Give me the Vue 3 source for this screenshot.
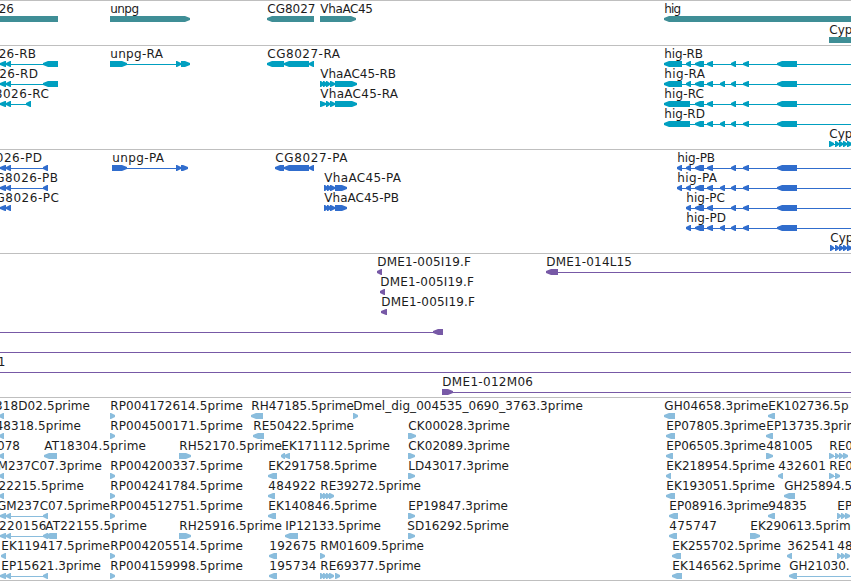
<script setup>
// label: [text, x, right edge], a null x anchors the text at its right edge
// and takes its width from the fourth value
// exons: [start, end], line: [start, end]
const f = (label, dir, exons = [], line = null) => ({ label, dir, exons, line })

const HIG = [[707, 713], [731, 736], [743, 749], [777, 797]]
const HIG_EXTRA = [[720, 725], ...HIG]
const CYP = [[829, 834], [835, 839], [839, 843], [843, 847], [847, 852]]
const CG_TAIL = [[0, 6], [6, 11]]

const rp = (name) => f([`${name}.5prime`, 110, 243], 'r', [[110, 115]])

const tracks = [
  {
    name: 'gene',
    height: 44,
    step: 21,
    color: '#3f8e96',
    rows: [
      [
        f(['CG8026', null, 14, 48], 'r', [[-20, 58, 0]]),
        f(['unpg', 110, 139], 'r', [[110, 190]]),
        f(['CG8027', 267, 315.5], 'l', [[267, 314]]),
        f(['VhaAC45', 320, 373], 'r', [[320, 356]]),
        f(['hig', 664, 681], 'l', [[664, 860]])
      ],
      [f(['Cyp', 829], 'r', [[829, 860, 0]])]
    ]
  },
  {
    name: 'transcript',
    height: 103,
    step: 20,
    color: '#009fc0',
    rows: [
      [
        f(['CG8026-RB', null, 36, 71.5], 'l', [...CG_TAIL, [43, 58]], [0, 58]),
        f(['unpg-RA', 110, 163], 'r', [[110, 127], [176, 181], [181, 190]], [110, 190]),
        f(['CG8027-RA', 267, 340], 'l', [[267, 284], [284, 309], [309, 314]], [267, 314]),
        f(['hig-RB', 664, 703], 'l', [[664, 682], [686, 691], [695, 704], ...HIG], [664, 851])
      ],
      [
        f(['CG8026-RD', null, 38, 73.5], 'l', [...CG_TAIL, [43, 58]], [0, 58]),
        f(['VhaAC45-RB', 320, 396], 'r', [[320, 324], [323, 327], [326, 330], [330, 335], [335, 357]], [320, 357]),
        f(['hig-RA', 664, 705], 'l', [[664, 682], [686, 691], [695, 704], ...HIG_EXTRA], [664, 851])
      ],
      [
        f(['CG8026-RC', null, 49, 73], 'l', [...CG_TAIL, [26, 31]], [0, 31]),
        f(['VhaAC45-RA', 320, 398], 'r', [[320, 326], [326, 330], [330, 335], [335, 357]], [320, 357]),
        f(['hig-RC', 664, 704], 'l', [[664, 690], [695, 704], ...HIG], [664, 851])
      ],
      [f(['hig-RD', 664, 705], 'l', [[664, 690], [695, 704], ...HIG_EXTRA], [664, 851])],
      [f(['Cyp', 829], 'r', CYP, [829, 851])]
    ]
  },
  {
    name: 'protein',
    height: 103,
    step: 20,
    color: '#306dcd',
    rows: [
      [
        f(['CG8026-PD', null, 42, 73], 'l', [...CG_TAIL, [43, 48]], [0, 48]),
        f(['unpg-PA', 112, 164], 'r', [[112, 127], [176, 181], [181, 188]], [112, 188]),
        f(['CG8027-PA', 275, 347.5], 'l', [[275, 284], [284, 309], [309, 314]], [275, 314]),
        f(['hig-PB', 677, 715], 'l', [[677, 682], [686, 691], [695, 704], ...HIG], [677, 851])
      ],
      [
        f(['CG8026-PB', null, 58, 71.5], 'l', [...CG_TAIL, [43, 48]], [0, 48]),
        f(['VhaAC45-PA', 324, 401], 'r', [[324, 328], [327, 331], [330, 335], [335, 347]], [324, 347]),
        f(['hig-PA', 677, 717], 'l', [[677, 682], [686, 691], [695, 704], ...HIG_EXTRA], [677, 851])
      ],
      [
        f(['CG8026-PC', null, 59, 72.5], 'l', CG_TAIL),
        f(['VhaAC45-PB', 324, 399], 'r', [[324, 328], [327, 331], [330, 335], [335, 347]], [324, 347]),
        f(['hig-PC', 686, 725], 'l', [[686, 691], [695, 704], ...HIG], [686, 851])
      ],
      [f(['hig-PD', 686, 726], 'l', [[686, 691], [695, 704], ...HIG_EXTRA], [686, 851])],
      [f(['Cyp', 830], 'r', [[830, 834], ...CYP.slice(1)], [830, 851])]
    ]
  },
  {
    name: 'clone',
    height: 143,
    step: 20,
    color: '#7759a6',
    rows: [
      [
        f(['DME1-005I19.F', 377, 471], 'l', [[377, 382]]),
        f(['DME1-014L15', 546, 632], 'l', [[546, 558]], [546, 851])
      ],
      [f(['DME1-005I19.F', 380, 474], 'l', [[380, 385]])],
      [f(['DME1-005I19.F', 381, 475], 'l', [[381, 387]])],
      [f(null, 'l', [[433, 443]], [0, 443])],
      [f(null, 'l', [], [0, 851])],
      [f(['1', null, 5.5], 'l', [], [0, 851])],
      [f(['DME1-012M06', 442, 533], 'r', [[442, 453]], [442, 851])]
    ]
  },
  {
    name: 'est',
    height: 182,
    step: 20,
    color: '#8abddd',
    rows: [
      [
        f(['318D02.5prime', null, 90, 95], 'l', [[-1, 4]]),
        rp('RP004172614'),
        f(['RH47185.5prime', 251, 354], 'l', [[251, 263]]),
        f(['Dmel_dig_004535_0690_3763.3prime', 353, 583], 'r', [[353, 358]]),
        f(['GH04658.3prime', 664, 768.5], 'l', [[664, 675]]),
        f(['EK102736.5p', 768], 'l', [[768, 775]])
      ],
      [
        f(['48318.5prime', null, 81, 85.5], 'l', [[-1, 4]]),
        rp('RP004500171'),
        f(['RE50422.5prime', 253, 354], 'l', [[253, 264]]),
        f(['CK00028.3prime', 408, 510], 'r', [[408, 416]]),
        f(['EP07805.3prime', 666, 766], 'l', [[666, 675]]),
        f(['EP13735.3prim', 766], 'l', [[766, 773]])
      ],
      [
        f(['078', null, 20], 'l', [[-1, 4]]),
        f(['AT18304.5prime', 44, 146], 'l', [[44, 57]]),
        f(['RH52170.5prime', 179, 282], 'r', [[179, 191]]),
        f(['EK171112.5prime', 281, 390], 'l', [[281, 285], [284, 290]]),
        f(['CK02089.3prime', 408, 510], 'r', [[408, 415]]),
        f(['EP06505.3prime', 666, 766], 'l', [[666, 673]]),
        f(['481005', 766, 813], 'r', [[766, 773]]),
        f(['RE0', 829], 'r', [[829, 834], [835, 839], [839, 843], [843, 848]], [829, 848])
      ],
      [
        f(['M237C07.3prime', null, 102, 104.5], 'l', [[-1, 4]]),
        rp('RP004200337'),
        f(['EK291758.5prime', 268, 377], 'l', [[268, 277]]),
        f(['LD43017.3prime', 408, 509], 'r', [[408, 415]]),
        f(['EK218954.5prime', 666, 775], 'l', [[666, 671]]),
        f(['432601', 778, 826], 'l', [[778, 783]]),
        f(['RE0', 829], 'r', [[829, 834], [835, 840]], [829, 840])
      ],
      [
        f(['22215.5prime', null, 84, 85.5], 'l', [[-1, 4]]),
        rp('RP004241784'),
        f(['484922', 268, 316], 'l', [[268, 275]]),
        f(['RE39272.5prime', 320, 421], 'r', [[320, 324], [323, 327], [326, 330], [329, 334]]),
        f(['EK193051.5prime', 666, 775], 'l', [[666, 675]]),
        f(['GH25894.5', 784], 'l', [[784, 795]])
      ],
      [
        f(['GM237C07.5prime', null, 110, 113], 'l', [...CG_TAIL, [43, 48]], [0, 48]),
        rp('RP004512751'),
        f(['EK140846.5prime', 268, 377], 'l', [[268, 276]]),
        f(['EP19847.3prime', 408, 508], 'r', [[408, 415]]),
        f(['EP08916.3prime', 669, 769], 'l', [[669, 678]]),
        f(['94835', 768, 807], 'l', [[768, 775]]),
        f(['EP', 837], 'r', [[837, 841], [841, 845], [845, 850]], [837, 850])
      ],
      [
        f(['220156', null, 46.5, 47.5], 'l', [...CG_TAIL, [43, 48]], [0, 48]),
        f(['AT22155.5prime', 45, 147], 'l', [[45, 57]]),
        f(['RH25916.5prime', 179, 282], 'r', [[179, 191]]),
        f(['IP12133.5prime', 285, 381], 'l', [[285, 298]]),
        f(['SD16292.5prime', 407, 509], 'r', [[408, 415]]),
        f(['475747', 669, 717], 'l', [[669, 677]]),
        f(['EK290613.5prim', 750], 'r', [[750, 760]])
      ],
      [
        f(['EK119417.5prime', 1, 110], 'l', [[1, 6]]),
        rp('RP004205514'),
        f(['192675', 269, 316.5], 'l', [[269, 277]]),
        f(['RM01609.5prime', 320, 424], 'r', [[320, 325]]),
        f(['EK255702.5prime', 672, 781], 'l', [[672, 681]]),
        f(['362541', 787, 835], 'l', [[787, 792]]),
        f(['48', 837], 'r', [[837, 841], [841, 845], [845, 850]], [837, 850])
      ],
      [
        f(['EP15621.3prime', 1, 101], 'l', [...CG_TAIL, [43, 48]], [0, 48]),
        rp('RP004159998'),
        f(['195734', 269, 316.5], 'l', [[269, 277]]),
        f(['RE69377.5prime', 320, 421], 'r', [[320, 324], [323, 327], [326, 330], [329, 334], [335, 340]]),
        f(['EK146562.5prime', 672, 781], 'l', [[672, 682]]),
        f(['GH21030.', 789], 'l', [[789, 797]], [789, 851])
      ]
    ]
  }
]

const exonPath = ([a, b, head = 5], dir) => {
  const h = Math.min(head, b - a - 1)
  if (head === 0) return `M${a} 0H${b}V6H${a}Z`
  if (dir === 'l') {
    return `M${a} 4V2L${a + h} 0H${b}V6H${a + h}Z`
  }
  return `M${b} 4V2L${b - h} 0H${a}V6H${b - h}Z`
}

const labelX = ([, x, end]) => (x === null ? end : x + 0.3)

const labelWidth = ([, x, end, width]) => {
  if (x === null) return width
  return end === undefined ? undefined : end - x - 0.3
}
</script>

<template>
  <div class="browser">
    <section v-for="track in tracks" :key="track.name" class="track">
      <svg class="canvas" width="851" :height="track.height">
        <g
          v-for="(row, i) in track.rows"
          :key="i"
          :transform="`translate(0 ${i * track.step})`"
        >
          <g v-for="(item, j) in row" :key="j">
            <g :fill="track.color" transform="translate(0 15)">
              <rect
                v-if="item.line"
                :x="item.line[0]"
                y="3"
                :width="item.line[1] - item.line[0]"
                height="1"
              />
              <path v-for="(exon, k) in item.exons" :key="k" :d="exonPath(exon, item.dir)" />
            </g>
            <text
              v-if="item.label"
              class="label"
              :x="labelX(item.label)"
              y="12"
              :text-anchor="item.label[1] === null ? 'end' : 'start'"
              :textLength="labelWidth(item.label)"
            >{{ item.label[0] }}</text>
          </g>
        </g>
      </svg>
    </section>
  </div>
</template>

<style>
body {
  margin: 0;
  background: #fff;
}
</style>

<style scoped>
.browser {
  display: flex;
  flex-direction: column;
  width: 851px;
  height: 581px;
  box-sizing: border-box;
  overflow: hidden;
  border-bottom: 1px solid #bfbfbf;
}
.track {
  border-top: 1px solid #bfbfbf;
}
.canvas {
  display: block;
}
.label {
  font-family: "DejaVu Sans", sans-serif;
  font-size: 12px;
  fill: #1c1c1c;
}
</style>
